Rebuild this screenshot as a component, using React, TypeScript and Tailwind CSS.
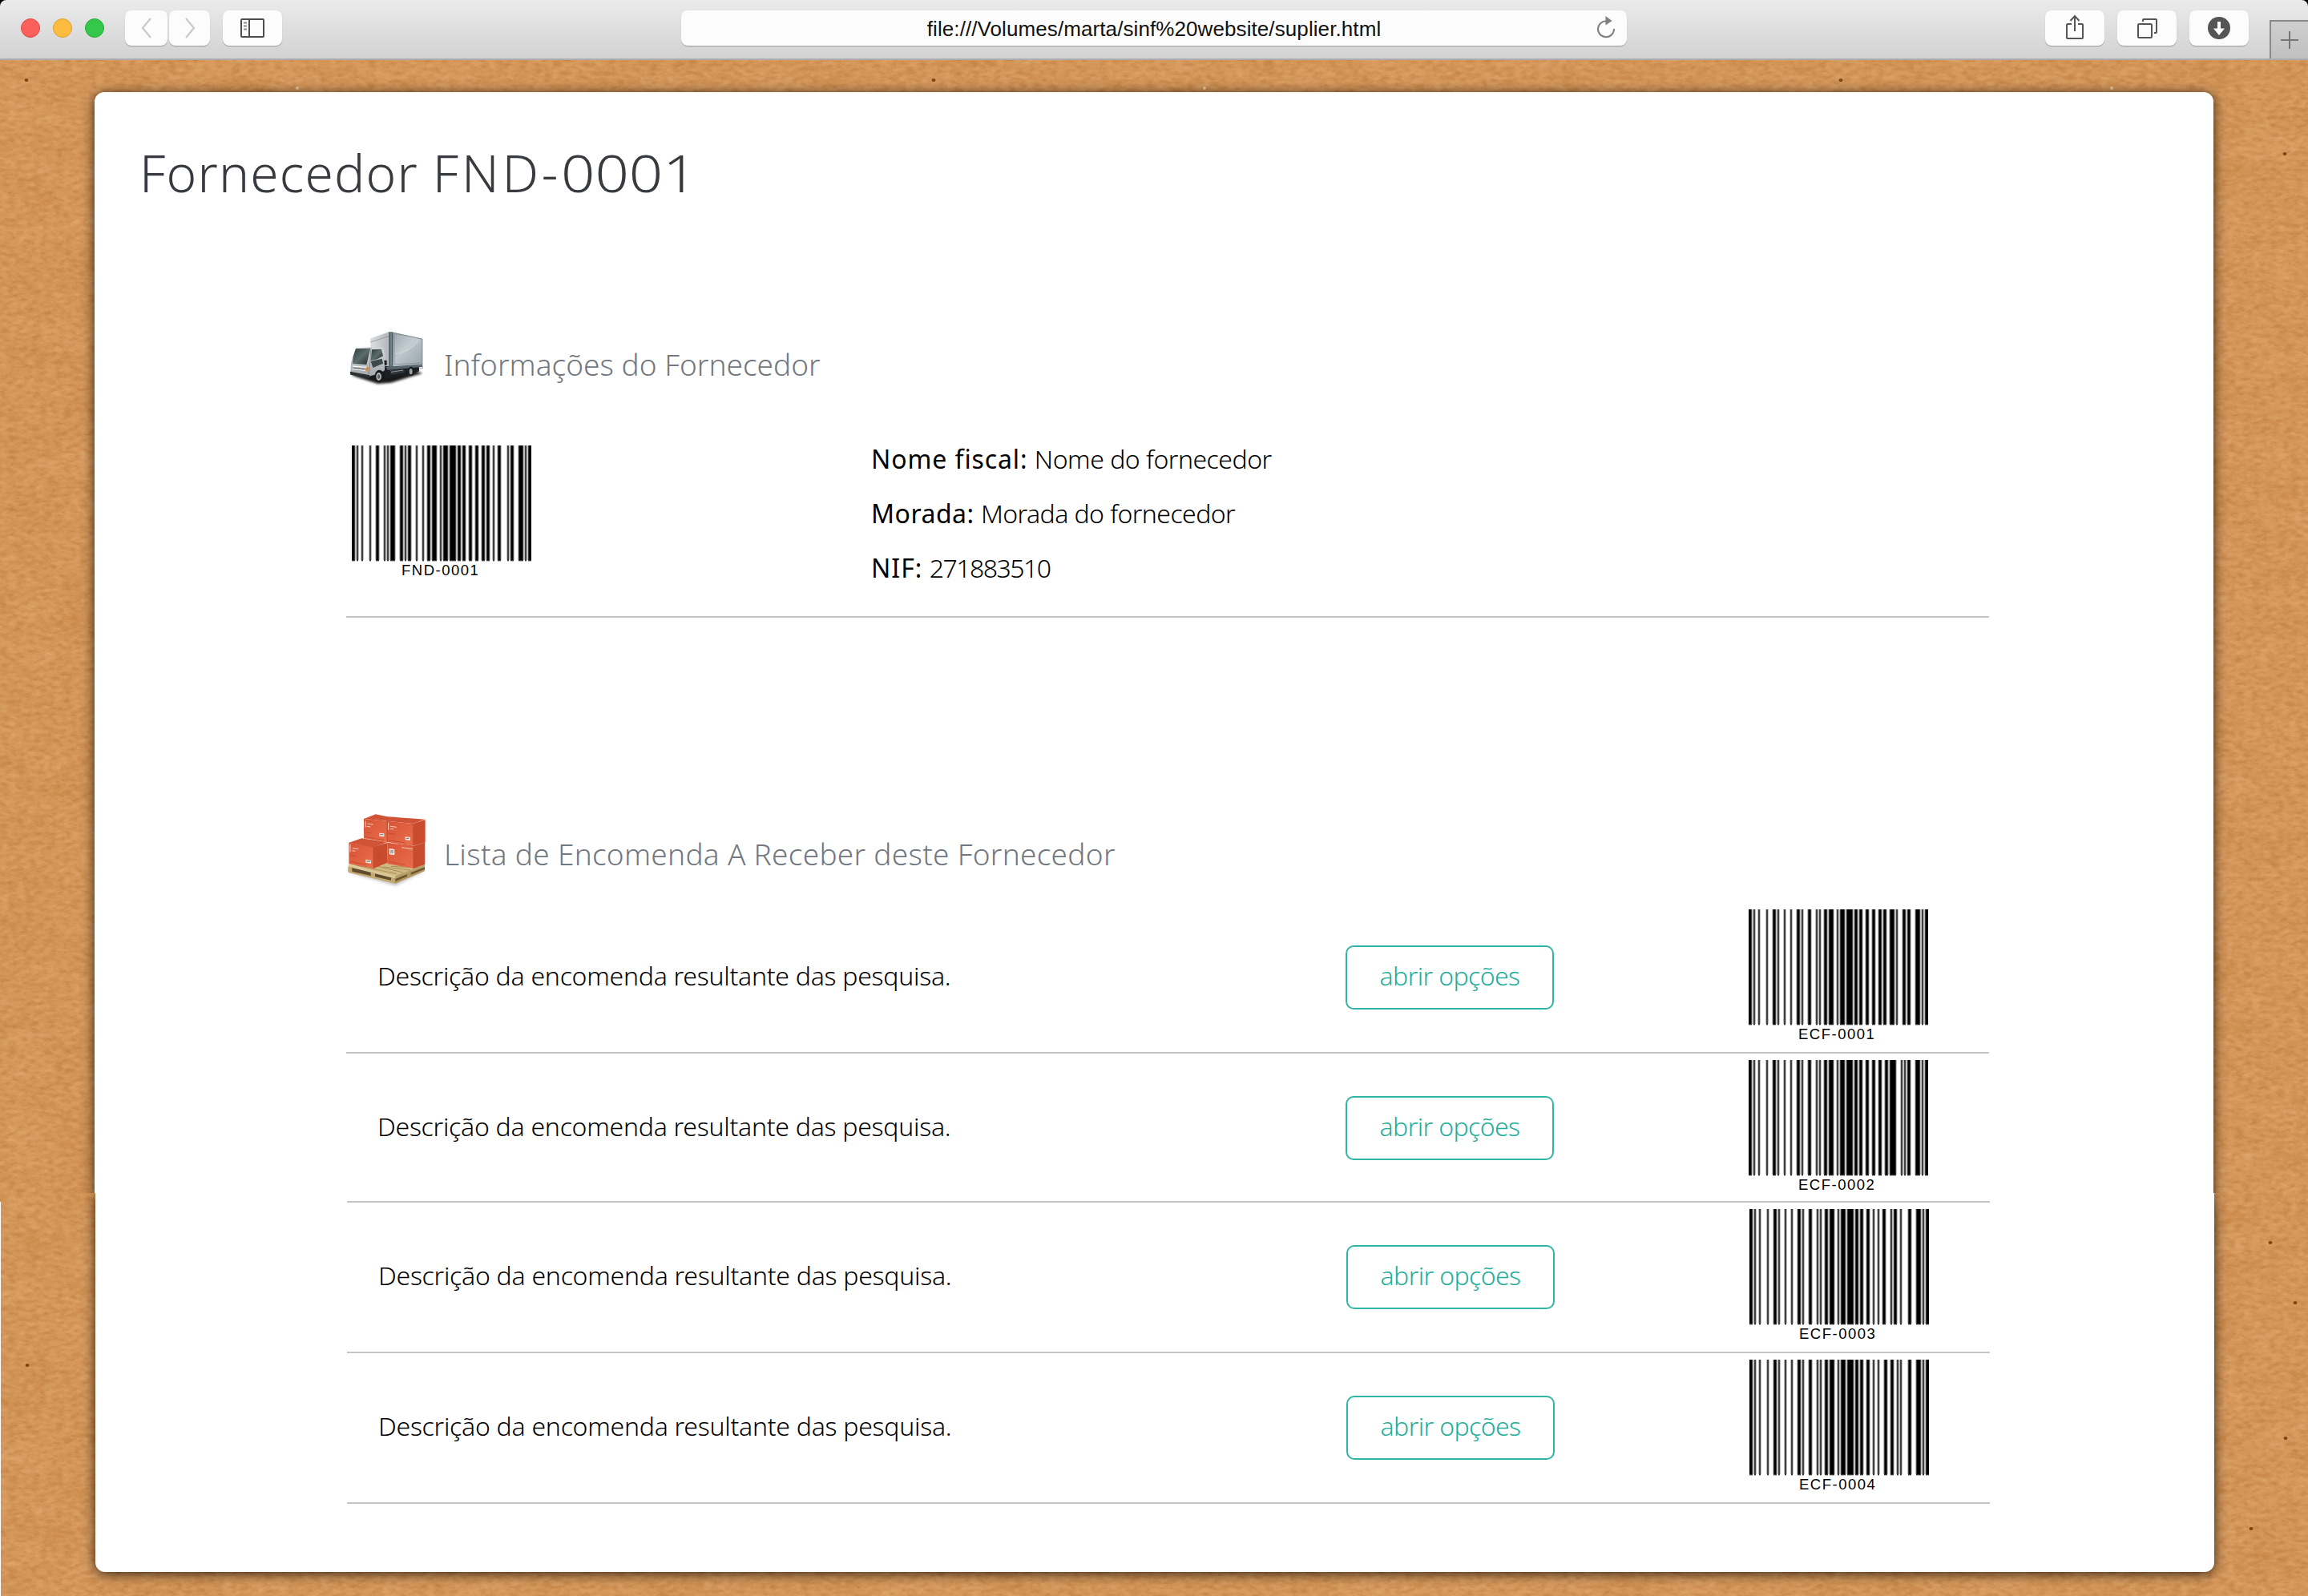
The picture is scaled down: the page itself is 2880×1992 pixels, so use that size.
import type { ReactNode } from 'react'

/* ---------- Code 128 barcodes ---------- */

const PATTERNS: Record<number, string> = {
  0: '212222', 1: '222122', 2: '222221', 3: '121223', 4: '121322', 13: '122132',
  35: '131321', 36: '112313', 37: '132113', 38: '132311', 46: '113321',
  55: '311321', 62: '431111', 69: '112214', 72: '122411', 76: '221114',
  99: '113141', 104: '211214', 106: '2331112',
}

function modulesFor(code: string): number[] {
  const values = [104, ...code.slice(0, 4).split('').map((c) => c.charCodeAt(0) - 32), 99, Number(code.slice(4, 6)), Number(code.slice(6, 8))]
  const check = values.reduce((sum, v, i) => sum + v * Math.max(i, 1), 0) % 103
  const out: number[] = []
  for (const v of [...values, check, 106]) {
    PATTERNS[v].split('').forEach((w, i) => {
      for (let k = 0; k < Number(w); k++) out.push(i % 2 === 0 ? 1 : 0)
    })
  }
  return out
}

function Barcode({ code }: { code: string }) {
  const m = modulesFor(code)
  const columns = m.flatMap((v, i) => [0.75 * v + 0.25 * (m[i - 1] ?? v), 0.75 * v + 0.25 * (m[i + 1] ?? v)])
  const path = (shade: number) =>
    columns.map((c, x) => (c === shade ? `M${x} 0h1v143h-1z` : '')).join('')
  const foot = columns.map((c, x) => (c >= 0.75 ? `M${x} 143h1v1h-1z` : '')).join('')
  return (
    <div className="flex w-[224px] flex-col">
      <svg width="224" height="145" viewBox="0 0 224 145" shapeRendering="crispEdges">
        <path d={path(1)} fill="#000" />
        <path d={path(0.75)} fill="#404040" />
        <path d={path(0.25)} fill="#bfbfbf" />
        <path d={foot} fill="#333" />
        <path d={foot} fill="#bbb" transform="translate(0 1)" />
      </svg>
      <span className="mt-px ml-[62px] font-['Liberation_Sans'] text-[18.5px] leading-5 tracking-[1.5px] text-black">{code}</span>
    </div>
  )
}

/* ---------- Browser toolbar ---------- */

function ToolButton({ className, children }: { className: string; children?: ReactNode }) {
  return (
    <div className={`flex h-[44px] items-center justify-center rounded-lg bg-[#fcfcfc] shadow-[0_1px_1px_rgba(0,0,0,0.28)] ${className}`}>
      {children}
    </div>
  )
}

function Toolbar() {
  return (
    <header className="relative z-10 flex h-[75px] items-start rounded-t-lg border-b-2 border-[#acacac] bg-gradient-to-b from-[#ebebeb] to-[#d2d2d2]">
      <div className="mt-[23px] ml-[26px] flex w-[130px] gap-4">
        <span className="size-6 rounded-full border border-[#e2463f] bg-[#fc605b]" />
        <span className="size-6 rounded-full border border-[#dfa023] bg-[#fdbc40]" />
        <span className="size-6 rounded-full border border-[#24ac33] bg-[#34c84a]" />
      </div>
      <ToolButton className="mt-[13px] w-[53px]">
        <svg width="16" height="26" viewBox="0 0 16 26" fill="none" stroke="#c9c9c9" strokeWidth="2.2"><path d="M13 1 3 13 13 25" /></svg>
      </ToolButton>
      <ToolButton className="mt-[13px] ml-[2px] w-[51px]">
        <svg width="16" height="26" viewBox="0 0 16 26" fill="none" stroke="#c9c9c9" strokeWidth="2.2"><path d="m3 1 10 12L3 25" /></svg>
      </ToolButton>
      <ToolButton className="mt-[13px] ml-4 w-[74px]">
        <svg width="30" height="24" viewBox="0 0 30 24" fill="none" stroke="#4d4d4d" strokeWidth="2">
          <rect x="1" y="1" width="28" height="22" rx="1" />
          <path d="M11 1v22" />
          <path d="M4 5.5h4M4 9.5h4M4 13.5h4" stroke="#8c8c8c" />
        </svg>
      </ToolButton>
      <ToolButton className="relative mt-[13px] ml-[498px] w-[1180px]">
        <span className="pt-0.5 font-['Liberation_Sans'] text-[26px] leading-[42px] tracking-[0.09px] text-[#111]">file:///Volumes/marta/sinf%20website/suplier.html</span>
        <svg className="absolute top-[7px] right-[13px]" width="26" height="28" viewBox="0 0 26 28" fill="none" stroke="#7f7f7f" strokeWidth="2">
          <path d="M14 6.3A10 10 0 1 0 23 16" />
          <path d="M12.5 0 20.5 6 12.5 11.5z" fill="#7f7f7f" stroke="none" />
        </svg>
      </ToolButton>
      <ToolButton className="mt-[13px] ml-[522px] w-[74px]">
        <svg className="-mt-[3px]" width="24" height="32" viewBox="0 0 24 32" fill="none" stroke="#555" strokeWidth="2">
          <path d="M8 12H3a1 1 0 0 0-1 1v16a1 1 0 0 0 1 1h18a1 1 0 0 0 1-1V13a1 1 0 0 0-1-1h-5" />
          <path d="M12 21V2M6.500 8 12 2l5.500 6" />
        </svg>
      </ToolButton>
      <ToolButton className="mt-[13px] ml-4 w-[74px]">
        <svg width="26" height="26" viewBox="0 0 26 26" fill="none" stroke="#555" strokeWidth="2">
          <rect x="2" y="8" width="17" height="17" rx="1.500" />
          <path d="M8 5V3a1 1 0 0 1 1-1h15a1 1 0 0 1 1 1v15a1 1 0 0 1-1 1h-2" />
        </svg>
      </ToolButton>
      <ToolButton className="mt-[13px] ml-4 w-[74px]">
        <svg width="28" height="28" viewBox="0 0 28 28">
          <circle cx="14" cy="14" r="14" fill="#555" />
          <path d="M12 6h4v8.500h5L14 23l-7-8.500h5z" fill="#fff" />
        </svg>
      </ToolButton>
      <div className="mt-[25px] ml-[26px] flex h-[48px] w-[48px] items-center justify-center border-t-2 border-l-2 border-[#8a8a8a] bg-gradient-to-b from-[#cfcfcf] to-[#c0c0c0]">
        <svg width="22" height="22" viewBox="0 0 22 22" stroke="#757575" strokeWidth="2"><path d="M11 0v22M0 11h22" /></svg>
      </div>
    </header>
  )
}

/* ---------- Cardboard backdrop ---------- */

const DARK_SPECKS = [[33, 100], [1165, 100], [2297, 100], [2851, 192], [34, 1704], [2833, 1551], [2864, 1626], [2852, 1795], [2809, 1908]]
const LIGHT_SPECKS = [[371, 110], [1503, 110], [2635, 110]]

function Cardboard() {
  return (
    <svg className="absolute inset-0" width="2880" height="1992" viewBox="0 0 2880 1992">
      <defs>
        <filter id="patches" x="0" y="0" width="100%" height="100%" colorInterpolationFilters="sRGB">
          <feTurbulence type="fractalNoise" baseFrequency="0.015 0.03" numOctaves="3" seed="4" />
          <feColorMatrix values="0 0 0 0 0.77  0 0 0 0 0.51  0 0 0 0 0.25  0.8 0 0 0 -0.2" />
        </filter>
        <filter id="fibres" x="0" y="0" width="100%" height="100%" colorInterpolationFilters="sRGB">
          <feTurbulence type="fractalNoise" baseFrequency="0.1 0.18" numOctaves="3" seed="11" />
          <feColorMatrix values="0 0 0 0 0.7  0 0 0 0 0.44  0 0 0 0 0.2  0.9 0 0 0 -0.33" />
        </filter>
        <filter id="glints" x="0" y="0" width="100%" height="100%" colorInterpolationFilters="sRGB">
          <feTurbulence type="fractalNoise" baseFrequency="0.09 0.2" numOctaves="3" seed="29" />
          <feColorMatrix values="0 0 0 0 0.9  0 0 0 0 0.71  0 0 0 0 0.48  0.9 0 0 0 -0.35" />
        </filter>
      </defs>
      <rect width="2880" height="1992" fill="#d99b60" />
      <rect width="2880" height="1992" filter="url(#patches)" />
      <rect width="2880" height="1992" filter="url(#fibres)" />
      <rect width="2880" height="1992" filter="url(#glints)" />
      {DARK_SPECKS.map(([x, y]) => <ellipse key={`${x}-${y}`} cx={x} cy={y} rx="2.5" ry="2" fill="#7d4513" />)}
      {LIGHT_SPECKS.map(([x, y]) => <circle key={x} cx={x} cy={y} r="2" fill="#f3cfa0" />)}
      <path d="M0.500 1500V1992" stroke="#fff" />
    </svg>
  )
}

/* ---------- Illustrations ---------- */

function Truck() {
  return (
    <svg width="110" height="90" viewBox="0 0 330 270">
      <defs>
        <linearGradient id="boxSide" x1="0" y1="0" x2="1" y2="1"><stop offset="0" stopColor="#8f9aa1" /><stop offset=".45" stopColor="#bcc6cc" /><stop offset="1" stopColor="#98a4ab" /></linearGradient>
        <linearGradient id="boxFront" x1="0" y1="0" x2="1" y2="0"><stop offset="0" stopColor="#dcdfe1" /><stop offset="1" stopColor="#a9afb3" /></linearGradient>
        <linearGradient id="cab" x1="0" y1="0" x2="0" y2="1"><stop offset="0" stopColor="#d7dadc" /><stop offset="1" stopColor="#a2a7ab" /></linearGradient>
        <linearGradient id="glass" x1="0" y1="0" x2="1" y2="1"><stop offset="0" stopColor="#2c3a3c" /><stop offset=".5" stopColor="#5d6d6c" /><stop offset="1" stopColor="#1b2627" /></linearGradient>
        <filter id="soft" x="-20%" y="-50%" width="140%" height="200%"><feGaussianBlur stdDeviation="5" /></filter>
      </defs>
      <path d="M30 190 130 222 180 218 298 182 250 168 150 170z" fill="#000" opacity=".9" filter="url(#soft)" />
      <path d="M150 150h135v25l-20 8-110 20z" fill="#1c1f21" />
      <path d="M103 52 172 28 186 30v128l-83-8z" fill="url(#boxFront)" />
      <path d="M103 66 172 44" stroke="#7d858a" strokeWidth="2" />
      <path d="M186 30 297 54v98l-111 7z" fill="url(#boxSide)" stroke="#5d6a70" strokeWidth="2" />
      <path d="M194 110c50-4 80-30 98-52l-60-14-42-6v72z" fill="#fff" opacity=".12" />
      <path d="M194 112c40-6 70-26 88-56" fill="none" stroke="#d8dfe2" strokeWidth="3" opacity=".7" />
      <path d="M192 38v112l100-6" fill="none" stroke="#77858c" strokeWidth="2" />
      <path d="M172 28h14v130h-14z" fill="#4b5a60" />
      <path d="M180 29v128" stroke="#9eabb0" strokeWidth="3" />
      <path d="M160 158 297 150v9l-130 12z" fill="#55636a" />
      <path d="M278 155h20v10h-16" fill="none" stroke="#777" strokeWidth="2" />
      <path d="M48 88 104 84 150 88 158 120 156 172 130 185 98 194 28 184 30 140z" fill="url(#cab)" />
      <path d="M48 91 103 89 88 150 36 146 38 120z" fill="url(#glass)" />
      <path d="M108 94 144 92 150 118 128 130 104 136z" fill="url(#glass)" />
      <path d="M104 138 146 128 150 146 112 162z" fill="#3c4a4c" />
      <path d="M105 88 100 160 96 186" stroke="#626b70" strokeWidth="2" fill="none" />
      <path d="M36 156 88 160M34 166 84 172" stroke="#f4f4f4" strokeWidth="4" />
      <path d="M38 163 82 168" stroke="#5a5f63" strokeWidth="3" />
      <path d="m84 172 6-14 7 4-5 12z" fill="#ef7f1c" />
      <path d="M26 176 100 190v12l-72-14z" fill="#2b2f31" />
      <path d="M154 134h10v18l-8 2z" fill="#1f2426" />
      <ellipse cx="136" cy="193" rx="17" ry="23" fill="#17191a" />
      <ellipse cx="134" cy="195" rx="10" ry="15" fill="#a9b1b5" />
      <ellipse cx="134" cy="195" rx="5" ry="8" fill="#596064" />
      <ellipse cx="255" cy="175" rx="11" ry="17" fill="#17191a" />
      <ellipse cx="254" cy="176" rx="6" ry="11" fill="#9aa2a6" />
      <path d="M175 170h55v10l-50 8z" fill="#30373a" />
      <path d="M180 178 225 171" stroke="#8a979d" strokeWidth="3" />
    </svg>
  )
}

function Box({ front, side, top }: { front: string; side: string; top: string }) {
  return (
    <>
      <path d={front} fill="url(#boxRed)" />
      <path d={side} fill="#c94c2f" />
      <path d={top} fill="#d05337" />
    </>
  )
}

function Pallet() {
  return (
    <svg width="110" height="104" viewBox="0 0 330 312">
      <defs>
        <linearGradient id="boxRed" x1="0" y1="0" x2="1" y2="1"><stop offset="0" stopColor="#d65436" /><stop offset="1" stopColor="#ea6e4b" /></linearGradient>
        <filter id="softer" x="-20%" y="-50%" width="140%" height="200%"><feGaussianBlur stdDeviation="6" /></filter>
      </defs>
      <path d="M20 240 196 290 306 235 200 220z" fill="#777" opacity=".6" filter="url(#softer)" />
      <path d="M20 212 120 190 306 210v6L196 258z" fill="#d0b983" />
      <path d="M50 216 200 248M80 208 225 243M150 222 252 234M180 220 280 224" stroke="#ab905a" strokeWidth="3" />
      <path d="M20 213 196 256v10L20 221z" fill="#dcc794" />
      <path d="M20 221 196 266v16L20 240z" fill="#5f4c2b" />
      <path d="M20 222h14v20l-14-4zM104 242l16 4v20l-16-4zM180 262l16 4v18l-16-4z" fill="#c4a970" />
      <path d="M20 236 196 276v8L20 243z" fill="#c4a970" />
      <path d="M196 256 306 214v8L196 267z" fill="#b99e64" />
      <path d="M196 267 306 222v14L196 282z" fill="#6a5531" />
      <path d="M196 276 306 230v7L196 284zM240 246l14-6v20l-14 5z" fill="#b3975f" />
      <Box front="M78 42 165 50V129L78 115z" side="M165 50 170 40V129H165z" top="M78 42 122 25 166 34 205 36 165 50z" />
      <Box front="M165 50 262 60V143L165 129z" side="M262 60 308 46V130L262 143z" top="M165 50 195 36 308 44 262 60z" />
      <Box front="M166 131 264 145V228L166 210z" side="M264 145 307 130V212L264 228z" top="M166 129 264 143 307 129 264 147z" />
      <Box front="M22 131 114 148V228L22 210z" side="M114 148 166 131V206L114 228z" top="M22 131 70 115 166 129 114 150z" />
      <g stroke="#ffd0c0" strokeWidth="3">
        <path d="M84 50v24M91 60l22 3M89 70l14 2M170 56v28M177 70l24 3M177 79l12 2M27 138v28M35 152l23 3M34 161l12 2M220 149l42 7" />
      </g>
      <g stroke="#b8432a" strokeWidth="2">
        <path d="M84 92l22 4M84 110l70 11M171 96l24 4M171 122l60 9M27 178l24 4M27 202l60 12M172 202l60 12M126 180l12-4M126 192l18-7M272 100l20-6M272 180l20-8M262 62v80M165 50v80M114 150v76M264 147v80" />
      </g>
      <g fill="#f3e7e1">
        <path d="M136 95l18 2v12l-18-2zM233 109l19 2v12l-19-2zM85 194l20 3v12l-20-3zM173 153l20 3v22l-20-3z" />
      </g>
      <path d="M139 101h12M236 115h12M88 201h14M177 162h12M177 169h12" stroke="#8a8a88" strokeWidth="4" />
    </svg>
  )
}

/* ---------- Page content ---------- */

function SectionTitle({ icon, height, offset, tracking, children }: { icon: ReactNode; height: string; offset: string; tracking: string; children: ReactNode }) {
  return (
    <div className={`-ml-1 flex items-start ${height}`}>
      {icon}
      <h2 className={`ml-4 font-['Noto_Sans'] text-[37px] leading-[48px] font-light whitespace-nowrap text-[#727881] ${offset} ${tracking}`}>{children}</h2>
    </div>
  )
}

function OrderRow({ code }: { code: string }) {
  return (
    <li className="grid h-[188px] w-[2050px] grid-cols-[1247px_503px_300px] border-b-2 border-[#c4c4c4]">
      <p className="self-center pb-1 pl-[39px] font-['Noto_Sans'] text-[32px] leading-[68px] font-light tracking-[-0.27px] text-black">Descrição da encomenda resultante das pesquisa.</p>
      <button className="flex h-20 w-[260px] items-center justify-center self-center rounded-[10px] border-2 border-[#2fb5a5] pb-[5px] font-['Noto_Sans'] text-[32px] leading-[68px] font-light tracking-[-0.6px] text-[#1fae9c]">abrir opções</button>
      <div className="pt-2"><Barcode code={code} /></div>
    </li>
  )
}

export default function App() {
  return (
    <div className="relative flex h-[1992px] w-[2880px] flex-col overflow-hidden bg-black">
      <div className="absolute inset-x-0 top-[75px] bottom-0 overflow-hidden">
        <div className="absolute inset-x-0 -top-[75px]"><Cardboard /></div>
      </div>
      <Toolbar />

      <div className="relative h-[1414px] overflow-hidden pt-10">
        <main className="ml-[118px] h-[1500px] w-[2644px] rounded-t-xl bg-white pt-[61px] shadow-[0_2px_16px_rgba(0,0,0,0.8)]">
          <h1 className="ml-[56px] h-[79px] font-['Noto_Sans'] text-[64px] leading-[80px] font-light text-[#373a3f]">
            <span className="tracking-[1.2px]">Fornecedor </span>
            <span className="tracking-[3.8px]">FND-</span>
            <span className="inline-block origin-left scale-x-[1.16]">0001</span>
          </h1>

          <section className="mt-[150px] ml-[314px] w-[2050px]">
            <SectionTitle icon={<Truck />} height="h-[90px]" offset="mt-[26px]" tracking="tracking-[0.03px]">Informações do Fornecedor</SectionTitle>
            <div className="flex h-[276px] border-b-2 border-[#c4c4c4]">
              <div className="mt-[61px] ml-[7px] w-[648px]"><Barcode code="FND-0001" /></div>
              <div className="mt-[44px] font-['Noto_Sans'] text-[32px] leading-[68px] font-light text-black">
                <p><span className="font-normal tracking-[0.9px]">Nome fiscal:</span> <span className="tracking-[-0.5px]">Nome do fornecedor</span></p>
                <p><span className="font-normal tracking-[0.5px]">Morada:</span> <span className="tracking-[-0.57px]">Morada do fornecedor</span></p>
                <p><span className="font-normal tracking-[1px]">NIF:</span> <span className="tracking-[-1.500px]">271883510</span></p>
              </div>
            </div>
          </section>

          <section className="mt-[237px] ml-[314px] w-[2050px]">
            <SectionTitle icon={<Pallet />} height="h-[104px]" offset="mt-[34px]" tracking="tracking-[0.29px]">Lista de Encomenda A Receber deste Fornecedor</SectionTitle>
            <ul className="mt-[15px]">
              <OrderRow code="ECF-0001" />
              <OrderRow code="ECF-0002" />
            </ul>
          </section>
        </main>
      </div>

      <div className="relative h-[503px] overflow-hidden">
        <div className="ml-[119px] h-[473px] w-[2644px] rounded-b-xl bg-white pt-[10px] shadow-[0_2px_16px_rgba(0,0,0,0.8)]">
          <ul className="ml-[314px] w-[2050px] border-t-2 border-[#c4c4c4]">
            <OrderRow code="ECF-0003" />
            <OrderRow code="ECF-0004" />
          </ul>
        </div>
      </div>
    </div>
  )
}
